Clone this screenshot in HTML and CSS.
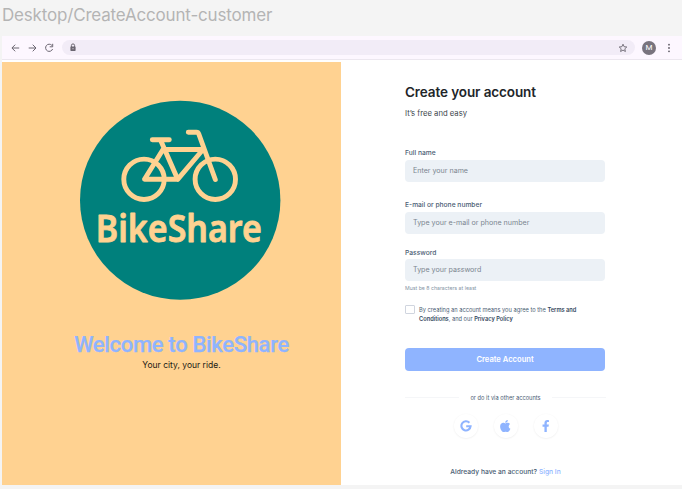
FILE: index.html
```html
<!DOCTYPE html>
<html lang="en">
<head>
<meta charset="utf-8">
<title>BikeShare – Create account</title>
<link rel="stylesheet" href="styles.css">
</head>
<body>
<div class="frame-label"><span>Desktop/CreateAccount-customer</span></div>
<div class="window">
  <header class="browser-bar">
    <svg class="nav" viewBox="0 0 46 12"><path d="M9.200 6H2M5.200 2.700 1.900 6l3.300 3.300M18.700 6h7.200M22.700 2.700 26 6l-3.300 3.300M41.900 3.400A3.600 3.600 0 1 0 42.600 7M42.700 1.800v3h-3"/></svg>
    <div class="address">
      <svg class="lock" viewBox="0 0 8 9"><path class="shackle" d="M2.400 4V2.500a1.600 1.600 0 0 1 3.200 0V4"/><rect x="1.400" y="3.500" width="5.200" height="4.400" rx=".6"/><circle cx="4" cy="5.700" r=".6"/></svg>
      <svg class="star" viewBox="0 0 10 10"><path d="m5 1.200 1.100 2.500 2.700.3-2 1.800.6 2.700L5 7.100 2.600 8.500l.6-2.700-2-1.800 2.700-.3z"/></svg>
    </div>
    <span class="avatar">M</span>
    <svg class="dots" viewBox="0 0 4 10"><circle cx="2" cy="1.700" r=".9"/><circle cx="2" cy="5" r=".9"/><circle cx="2" cy="8.300" r=".9"/></svg>
  </header>
  <main class="page">
    <section class="hero">
      <svg class="logo" viewBox="0 0 201 200">
        <ellipse cx="100.200" cy="100.200" rx="100.200" ry="99.500"/>
        <g class="bike">
          <circle cx="64" cy="79.300" r="20.200"/><circle cx="135.300" cy="79.300" r="20.200"/>
          <path d="M72.300 39.700h17M80.500 40 97.700 79.300H64.500L83 49.500h40L97.700 79.300M108.300 32.300h8.200q1.700 0 2.300 1.700l16.500 45.500"/>
        </g>
        <text x="15.800" y="141.500" textLength="166" lengthAdjust="spacingAndGlyphs">BikeShare</text>
      </svg>
      <h1 class="welcome">Welcome to BikeShare</h1>
      <p class="tagline">Your city, your ride.</p>
    </section>
    <form class="signup">
      <h2>Create your account</h2>
      <p class="lead">It’s free and easy</p>
      <label class="field">Full name<input placeholder="Enter your name"></label>
      <label class="field second">E-mail or phone number<input placeholder="Type your e-mail or phone number"></label>
      <label class="field third">Password<input placeholder="Type your password"></label>
      <p class="hint">Must be 8 characters at least</p>
      <div class="terms"><span class="box"></span><p>By creating an account means you agree to the <b>Terms and<br>Conditions</b>, and our <b>Privacy Policy</b></p></div>
      <button type="button">Create Account</button>
      <div class="divider"><span>or do it via other accounts</span></div>
      <div class="social">
        <span class="disc"><svg viewBox="0 0 12 12"><path class="google" d="M9.400 2.700A4.600 4.600 0 1 0 10.600 6.200H6.200"/></svg></span>
        <span class="disc"><svg class="apple" viewBox="0 0 384 512"><path d="M318.700 268.700c-.2-36.700 16.400-64.400 50-84.800-18.800-26.900-47.200-41.700-84.700-44.600-35.500-2.800-74.300 20.700-88.500 20.700-15 0-49.400-19.700-76.400-19.700C63.300 141.200 4 184.800 4 273.500q0 39.300 14.400 81.200c12.800 36.700 59 126.700 107.200 125.200 25.200-.6 43-17.900 75.800-17.900 31.800 0 48.300 17.900 76.400 17.900 48.600-.7 90.400-82.500 102.600-119.300-65.200-30.700-61.700-90-61.700-91.900zm-56.600-164.200c27.300-32.400 24.800-61.900 24-72.500-24.100 1.400-52 16.400-67.900 34.900-17.500 19.800-27.800 44.300-25.600 71.900 26.100 2 49.900-11.400 69.500-34.300z"/></svg></span>
        <span class="disc"><svg viewBox="0 0 320 512"><path d="M279 288l14-93h-89v-60c0-25 12-50 52-50h41V7s-37-7-72-7c-73 0-121 44-121 125v70H23v93h81v224h100V288z"/></svg></span>
      </div>
      <p class="signin">Aldready have an account? <a>Sign In</a></p>
    </form>
  </main>
</div>
</body>
</html>
```
FILE: styles.css
```css
* { box-sizing: border-box; }
body { margin: 0; width: 682px; height: 489px; overflow: hidden; background: #f4f4f4; font-family: Inter, sans-serif; }
h1, h2, p { margin: 0; }
.frame-label { height: 36px; padding: 5px 0 0 2px; font-size: 17px; line-height: 21px; letter-spacing: -.18px; color: #b4b4b4; white-space: nowrap; }
.window { margin-left: 2px; height: 449px; background: #fff; }
.browser-bar { height: 24px; display: flex; align-items: center; background: #fdf7ff; border-bottom: 1px solid #ece7ef; }
.nav { width: 46px; height: 12px; margin-left: 8px; fill: none; stroke: #6b6671; stroke-width: 1; }
.address { width: 573px; height: 15px; margin-left: 6px; padding: 0 7px; border-radius: 8px; background: #f2ecf7; display: flex; align-items: center; justify-content: space-between; }
.lock { width: 8px; height: 9px; fill: #6b6671; }
.lock .shackle { fill: none; stroke: #6b6671; }
.lock circle { fill: #d8d2dd; }
.star { width: 10px; height: 10px; fill: none; stroke: #6b6671; stroke-width: .9; }
.avatar { width: 14px; height: 14px; margin-left: 7px; border-radius: 50%; background: #79747e; color: #fff; font: 400 8px/14px Roboto, sans-serif; text-align: center; }
.dots { width: 4px; height: 10px; margin-left: 11px; fill: #605c66; }
.page { display: flex; height: 423px; margin-top: 2px; }
.hero { width: 339px; background: #ffd291; padding-top: 38px; text-align: center; }
.logo { display: block; width: 201px; height: 200px; margin-left: 78px; }
.logo ellipse { fill: #00807c; }
.bike { fill: none; stroke: #ffd291; stroke-width: 4.9; stroke-linecap: round; stroke-linejoin: round; }
.logo text { font: 600 37px "Noto Sans", sans-serif; fill: #ffd291; stroke: #ffd291; stroke-width: .8; stroke-linejoin: round; }
.welcome { margin: 31px 0 0 20px; font: 500 22px/28px Roboto, sans-serif; letter-spacing: -.32px; color: #8fb4ff; -webkit-text-stroke: .25px #8fb4ff; white-space: nowrap; }
.tagline { margin: 0 0 0 20px; font-size: 8.5px; line-height: 12px; color: #1c1a14; }
.signup { width: 201px; margin-left: 64px; padding-top: 21px; color: #4a5d73; }
h2 { font-size: 13.5px; line-height: 18px; font-weight: 600; letter-spacing: -.1px; color: #212529; white-space: nowrap; }
.lead { margin-top: 8px; font-size: 7.7px; line-height: 10px; color: #40464c; }
.field { display: block; margin-top: 30px; font-size: 6.7px; line-height: 9px; font-weight: 500; }
.second { margin-top: 19px; }
.third { margin-top: 15px; }
.field input { display: block; width: 200px; height: 22px; margin-top: 2px; padding: 0 8px 1px; border: 0; border-radius: 4px; background: #ecf1f6; font: 400 7.1px Inter, sans-serif; }
.field.third input { margin-top: 1px; }
.field input::placeholder { color: #7b858f; opacity: 1; }
.hint { margin-top: 4px; font-size: 5.2px; line-height: 7px; color: #8594a5; }
.terms { display: flex; margin-top: 13px; font-size: 5.7px; line-height: 9px; white-space: nowrap; }
.box { width: 10px; height: 9px; margin: 0 4px 0 0; border: 1px solid #d0d5df; border-radius: 1px; }
.terms b { font-weight: 600; color: #34475c; }
button { display: block; width: 200px; height: 23px; margin-top: 24.500px; padding: 0; border: 0; border-radius: 4px; background: #8fb4ff; color: #fff; font: 600 7.6px Inter, sans-serif; }
.divider { display: flex; align-items: center; gap: 11px; height: 8px; margin-top: 23px; font-size: 5.7px; white-space: nowrap; }
.divider::before, .divider::after { content: ""; flex: 1; height: 1px; background: #f5f6f8; }
.social { display: flex; justify-content: center; gap: 16px; margin-top: 12px; }
.disc { width: 24px; height: 24px; border-radius: 50%; display: flex; align-items: center; justify-content: center; box-shadow: 0 .5px 2px #00000014; }
.disc svg { height: 12px; fill: #8fb4ff; }
.disc .apple { height: 14px; }
.disc .google { fill: none; stroke: #8fb4ff; stroke-width: 2.1; }
.signin { margin-top: 30.5px; font-size: 6.7px; line-height: 9px; font-weight: 500; text-align: center; white-space: nowrap; }
.signin a { color: #8fb4ff; }
```
